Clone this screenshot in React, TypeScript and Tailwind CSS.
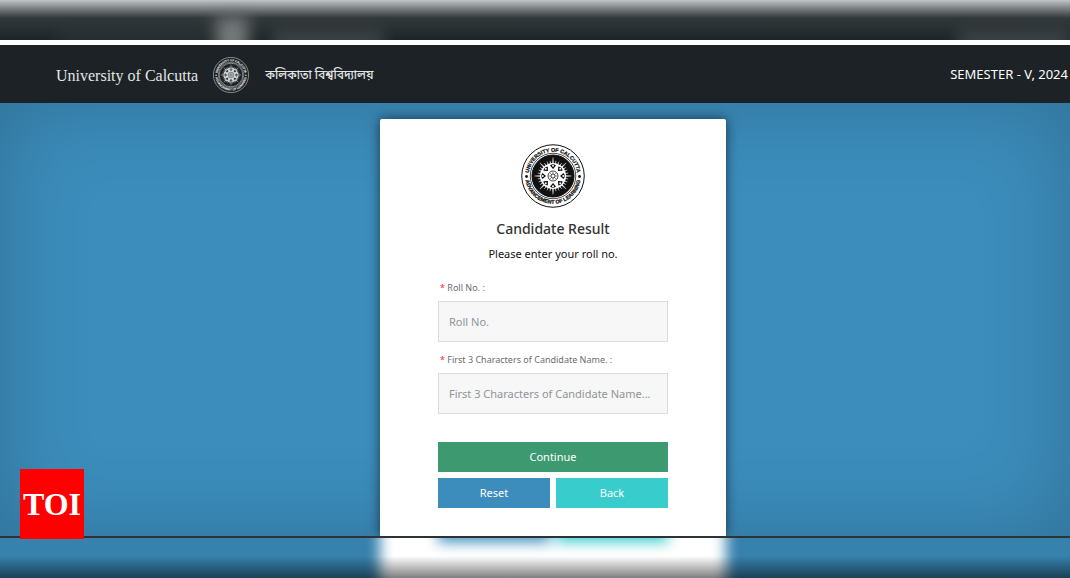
import React from 'react';

interface SealProps {
  id: string;
  ink: string;
  paper: string;
  // colour of the disc behind the sun
  disc: string;
  className?: string;
}

const RAYS = Array.from({ length: 32 }, (_, i) => i * 11.25);
const PETALS = Array.from({ length: 8 }, (_, i) => i * 45);

const Seal: React.FC<SealProps> = ({ id, ink, paper, disc, className }) => {
  const sun = disc === ink ? paper : ink;
  const detail = disc === ink ? ink : paper;
  return (
    <svg viewBox="0 0 128 128" className={className} role="img" aria-label="University of Calcutta seal">
      <defs>
        <path id={`${id}-top`} d="M 15.5 64 A 48.5 48.5 0 0 1 112.5 64" />
        <path id={`${id}-bottom`} d="M 8.5 64 A 55.5 55.5 0 0 0 119.5 64" />
      </defs>
      <circle cx="64" cy="64" r="62.5" fill={paper} stroke={ink} strokeWidth="2" />
      <circle cx="64" cy="64" r="45.5" fill="none" stroke={ink} strokeWidth="1.5" />
      <circle cx="64" cy="64" r="42" fill={disc} stroke={ink} strokeWidth="2" />
      <g fontFamily="'Liberation Sans', Arial, sans-serif" fontWeight="bold" fontSize="10.5" fill={ink} stroke={ink} strokeWidth="0.5">
        <text textAnchor="middle">
          <textPath href={`#${id}-top`} startOffset="50%">UNIVERSITY OF CALCUTTA</textPath>
        </text>
        <text textAnchor="middle">
          <textPath href={`#${id}-bottom`} startOffset="50%">ADVANCEMENT OF LEARNING</textPath>
        </text>
      </g>
      <circle cx="11" cy="65" r="2.8" fill={ink} />
      <circle cx="117" cy="65" r="2.8" fill={ink} />
      {RAYS.map((angle, i) => (
        <path
          key={angle}
          d={i % 4 === 0 ? 'M62.5 42 L64 27 L65.5 42 Z' : 'M63.2 42 L64 33 L64.8 42 Z'}
          fill={sun}
          stroke={sun}
          strokeWidth="0.6"
          transform={`rotate(${angle} 64 64)`}
        />
      ))}
      <circle cx="64" cy="64" r="26" fill={sun} />
      {PETALS.map((angle) => (
        <g key={angle} transform={`rotate(${angle} 64 64)`}>
          <path d="M58 43 Q64 38 70 43 L64 50 Z" fill={detail} />
          <circle cx="64" cy="43.5" r="2" fill={sun} />
        </g>
      ))}
      <circle cx="64" cy="64" r="10" fill={sun} stroke={detail} strokeWidth="1.6" />
      {PETALS.map((angle) => (
        <path key={angle} d="M64 64 V56" stroke={detail} strokeWidth="1" transform={`rotate(${angle} 64 64)`} />
      ))}
      <circle cx="64" cy="64" r="4" fill={sun} stroke={detail} strokeWidth="1.5" />
    </svg>
  );
};

interface FieldProps {
  id: string;
  label: string;
  placeholder: string;
}

const Field: React.FC<FieldProps> = ({ id, label, placeholder }) => {
  return (
    <div className="mb-2.5">
      <label htmlFor={id} className="block pl-0.5 mb-[5px] text-[9px] leading-4 text-[#6c6c6c]">
        <span className="text-red-500">*</span> {label}
      </label>
      <input
        id={id}
        type="text"
        placeholder={placeholder}
        className="block w-full h-[41px] px-2.5 text-[11px] text-[#555] bg-[#f7f7f7] border border-[#dcdcdc] outline-none placeholder:text-[#8e9499] placeholder:opacity-100"
      />
    </div>
  );
};

const App: React.FC = () => {
  return (
    <div className="relative min-h-screen flex flex-col overflow-hidden bg-[#3c8dbc] font-['Noto_Sans','Open_Sans',sans-serif]">
      <div className="h-10 overflow-hidden bg-linear-to-b from-[#c3c6c6] via-[#33393b] via-45% to-[#1c2427]">
        <div className="flex items-start pl-14 pt-6 blur-[8px]">
          <div className="w-38 h-8 mt-2 bg-white/5" />
          <div className="w-8 h-10 ml-2 -mt-2 bg-[#75797b]" />
          <div className="w-28 h-8 ml-6 mt-2 bg-white/15" />
          <div className="w-28 h-8 ml-auto mt-2 bg-white/15" />
        </div>
      </div>

      <header className="h-[63px] flex items-center justify-between pl-14 pr-0.5 bg-[#1c2225] border-t-[5px] border-white text-white">
        <div className="flex items-center">
          <span className="pt-1 font-['Liberation_Serif',serif] text-[16px] text-[#e4e6e6]">University of Calcutta</span>
          <Seal id="header-seal" ink="#d5d8d9" paper="#1c2225" disc="#1c2225" className="w-9 h-9 mt-0.5 ml-[15px]" />
          <span className="ml-4 pt-1 text-[12px] font-medium font-['Noto_Sans_Bengali','Noto_Sans',sans-serif] text-[#e4e6e6]">কলিকাতা বিশ্ববিদ্যালয়</span>
        </div>
        <span className="pt-0.5 text-[13px]">SEMESTER - V, 2024</span>
      </header>

      <main className="flex-1 flex justify-center items-stretch pt-4 pl-9 overflow-hidden border-b-2 border-[#2c3236] shadow-[inset_0_0_90px_rgba(0,0,0,0.2)]">
        <form
          className="w-[346px] px-[58px] pt-[25px] rounded-t-xs bg-white shadow-[0_0_12px_rgba(0,0,0,0.6)]"
          onSubmit={(e) => e.preventDefault()}
        >
          <Seal id="card-seal" ink="#111" paper="#fff" disc="#111" className="block w-16 h-16 mx-auto" />
          <h1 className="mt-[11px] text-center text-[14px] leading-5 font-medium text-[#333]">Candidate Result</h1>
          <p className="mt-[5px] mb-4 text-center text-[11px] leading-5 text-[#111]">Please enter your roll no.</p>

          <Field id="roll" label="Roll No. :" placeholder="Roll No." />
          <Field id="name" label="First 3 Characters of Candidate Name. :" placeholder="First 3 Characters of Candidate Name..." />

          <div className="grid grid-cols-2 gap-1.5 pt-[18px] text-[11px] text-white">
            <button type="submit" className="col-span-2 h-[30px] bg-[#3d9970]">Continue</button>
            <button type="reset" className="h-[30px] bg-[#3c8dbc]">Reset</button>
            <button type="button" className="h-[30px] bg-[#39cccc]">Back</button>
          </div>
        </form>
      </main>

      <div className="relative h-10 overflow-hidden bg-[#3781ad]">
        <div className="flex justify-center -mt-4 pl-9 blur-[7px]">
          <div className="w-[346px] h-20 px-[58px] bg-white">
            <div className="flex gap-1.5 h-5">
              <div className="flex-1 bg-[#3c8dbc]" />
              <div className="flex-1 bg-[#39cccc]" />
            </div>
          </div>
        </div>
        <div className="absolute inset-0 bg-linear-to-b from-transparent from-45% to-black/50" />
      </div>

      <div className="absolute left-5 bottom-[39px] w-16 h-[70px] flex items-center justify-center bg-[#ff0000] text-white font-['Liberation_Serif',serif] font-bold text-[32px]">
        TOI
      </div>
    </div>
  );
};

export default App;
